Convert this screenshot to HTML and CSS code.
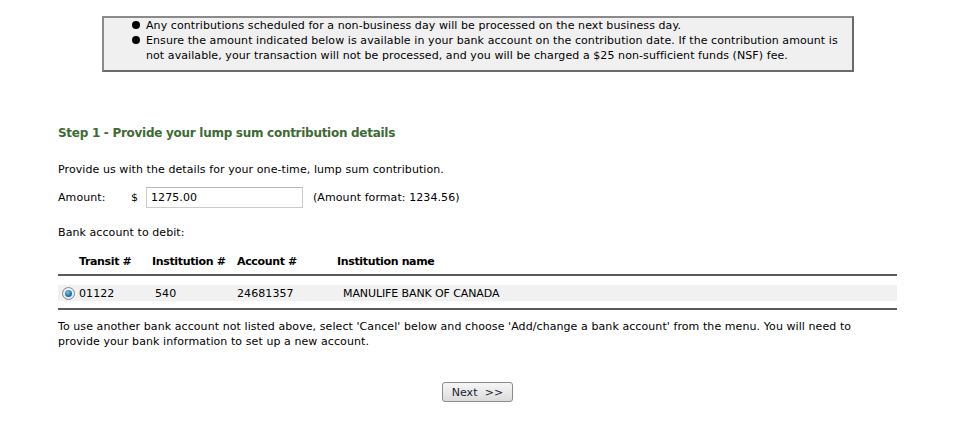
FILE: index.html
```html
<!DOCTYPE html>
<html>
<head>
<meta charset="utf-8">
<link rel="stylesheet" href="styles.css">
</head>
<body>
<div class="page">
  <div class="notice">
    <ul class="notice-list">
      <li>Any contributions scheduled for a non-business day will be processed on the next business day.</li>
      <li>Ensure the amount indicated below is available in your bank account on the contribution date. If the contribution amount is not available, your transaction will not be processed, and you will be charged a $25 non-sufficient funds (NSF) fee.</li>
    </ul>
  </div>

  <div class="content">
    <h2 class="step-title">Step 1 - Provide your lump sum contribution details</h2>
    <p class="intro">Provide us with the details for your one-time, lump sum contribution.</p>
    <div class="amount-row">
      <span class="amount-label">Amount:</span>
      <span class="currency">$</span>
      <input class="amount-input" type="text" value="1275.00">
      <span class="amount-hint">(Amount format: 1234.56)</span>
    </div>
    <p class="bank-label">Bank account to debit:</p>

    <div class="accounts">
      <div class="acc-row acc-head">
        <span class="c-radio"></span>
        <span class="c-transit">Transit #</span>
        <span class="c-inst">Institution #</span>
        <span class="c-acct">Account #</span>
        <span class="c-name">Institution name</span>
      </div>
      <div class="acc-body">
        <div class="acc-row acc-data">
          <span class="c-radio"><span class="radio"><span class="radio-dot"></span></span></span>
          <span class="c-transit">01122</span>
          <span class="c-inst d-inst">540</span>
          <span class="c-acct">24681357</span>
          <span class="c-name d-name">MANULIFE BANK OF CANADA</span>
        </div>
      </div>
    </div>

    <p class="note">To use another bank account not listed above, select 'Cancel' below and choose 'Add/change a bank account' from the menu. You will need to provide your bank information to set up a new account.</p>

    <div class="actions">
      <button class="btn-next" type="button">Next &nbsp;&gt;&gt;</button>
    </div>
  </div>
</div>
</body>
</html>
```

FILE: styles.css
```css
* { box-sizing: border-box; }
html, body {
  margin: 0;
  padding: 0;
  background: #ffffff;
}
body {
  font-family: Verdana, "DejaVu Sans", sans-serif;
  font-size: 11px;
  letter-spacing: 0.08px;
  color: #000;
}
.page {
  width: 956px;
  padding-top: 16px;
}
.notice {
  margin-left: 102px;
  width: 752px;
  height: 56px;
  border: 2px solid #6a6a6a;
  border-top-color: #8a8a8a;
  border-left-color: #8a8a8a;
  background: #f0f0f0;
}
.notice-list {
  margin: 0;
  padding: 0 0 0 42px;
  list-style: none;
}
.notice-list li {
  position: relative;
  line-height: 15px;
  padding-right: 14px;
}
.notice-list li::before {
  content: "";
  position: absolute;
  left: -14px;
  top: 3px;
  width: 8px;
  height: 8px;
  border-radius: 50%;
  background: #000;
}
.content {
  padding: 0 59px 0 58px;
}
.step-title {
  margin: 53px 0 0 0;
  font-size: 12px;
  font-weight: bold;
  letter-spacing: -0.28px;
  color: #3d6b33;
  line-height: 16px;
}
.intro {
  margin: 21px 0 0 0;
  line-height: 15px;
}
.amount-row {
  display: flex;
  align-items: center;
  margin-top: 10px;
  height: 20px;
}
.amount-label { width: 73px; }
.currency { width: 15px; }
.amount-input {
  width: 157px;
  height: 21px;
  border: 1px solid #c8ccd2;
  border-top-color: #b4b8be;
  padding: 0 4px;
  font-family: inherit;
  font-size: 11px;
  letter-spacing: 0.08px;
  color: #000;
  margin-right: 10px;
}
.bank-label {
  margin: 18px 0 0 0;
  line-height: 15px;
}
.accounts {
  margin-top: 13px;
}
.acc-row {
  display: flex;
  align-items: center;
}
.acc-head {
  font-weight: bold;
  letter-spacing: -0.35px;
  height: 17px;
  border-bottom: 2px solid #5a5a5a;
  box-sizing: content-box;
  padding-bottom: 4px;
}
.acc-body {
  padding: 9px 0 7px;
  border-bottom: 2px solid #5a5a5a;
}
.acc-data {
  background: #f1f1f1;
  height: 16px;
}
.c-radio { width: 21px; display: flex; align-items: center; padding-left: 4px; }
.c-transit { width: 73px; }
.c-inst { width: 85px; }
.c-acct { width: 100px; }
.d-inst { padding-left: 3px; }
.d-name { padding-left: 6px; letter-spacing: -0.1px; }
.radio {
  width: 13px;
  height: 13px;
  border-radius: 50%;
  border: 1px solid #7a8a99;
  background: radial-gradient(circle at 50% 40%, #ffffff 0%, #d9dee3 100%);
  display: flex;
  align-items: center;
  justify-content: center;
}
.radio-dot {
  width: 7px;
  height: 7px;
  border-radius: 50%;
  background: radial-gradient(circle at 40% 35%, #6fc3f5 0%, #1f6fb5 60%, #0d3f78 100%);
}
.note {
  margin: 9px 0 0 0;
  line-height: 15px;
  padding-right: 30px;
}
.actions {
  display: flex;
  justify-content: center;
  margin-top: 33px;
}
.btn-next {
  width: 71px;
  height: 20px;
  font-family: inherit;
  font-size: 11px;
  letter-spacing: 0.08px;
  color: #1a1a3a;
  border: 1px solid #8a8a8a;
  border-radius: 3px;
  background: linear-gradient(#f6f6f6, #dcdcdc);
  padding: 0;
}
```
